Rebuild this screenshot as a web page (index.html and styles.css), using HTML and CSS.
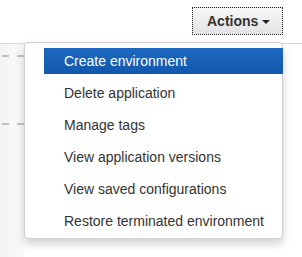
FILE: index.html
```html
<!DOCTYPE html>
<html lang="en">

<head>
  <meta charset="UTF-8">
  <meta name="viewport" content="width=device-width, initial-scale=1.0">
  <title>Actions</title>
  <link rel="stylesheet" href="styles.css">
</head>

<body>
  <div class="toolbar">
    <button class="actions-button" type="button">Actions <span class="caret"></span></button>
  </div>

  <div class="content">
    <div class="side-panel">
      <div class="dash-row"></div>
      <div class="dash-row"></div>
    </div>
  </div>

  <ul class="dropdown-menu">
    <li class="menu-item active">Create environment</li>
    <li class="menu-item">Delete application</li>
    <li class="menu-item">Manage tags</li>
    <li class="menu-item">View application versions</li>
    <li class="menu-item">View saved configurations</li>
    <li class="menu-item">Restore terminated environment</li>
  </ul>
</body>

</html>
```

FILE: styles.css
```css
* {
  margin: 0;
  padding: 0;
  box-sizing: border-box;
}

body {
  font-family: "Liberation Sans", Arial, sans-serif;
  background-color: white;
  width: 302px;
  height: 257px;
  overflow: hidden;
  position: relative;
}

.toolbar {
  display: flex;
  justify-content: flex-end;
  padding: 7px 19px 0 0;
  height: 43px;
}

.actions-button {
  font-family: "Liberation Sans", Arial, sans-serif;
  font-size: 14px;
  font-weight: bold;
  color: #333;
  height: 28px;
  width: 91px;
  padding: 0 0 0 14px;
  display: flex;
  align-items: center;
  border: 1px dotted #222;
  border-radius: 0;
  background: linear-gradient(to bottom, #f8f8f8, #e2e2e2);
}

.caret {
  display: inline-block;
  width: 0;
  height: 0;
  margin-left: 4px;
  margin-top: 1px;
  border-left: 4px solid transparent;
  border-right: 4px solid transparent;
  border-top: 4px solid #222;
}

.content {
  border-top: 1px solid #d8d8d8;
  height: 214px;
}

.side-panel {
  width: 24px;
  height: 100%;
  background: linear-gradient(to right, #f4f4f4, #fafafa);
  padding-top: 11px;
  display: flex;
  flex-direction: column;
  gap: 66px;
}

.dash-row {
  height: 2px;
  background: repeating-linear-gradient(to right, #c4c4c4 0 7px, transparent 7px 15px);
  margin-left: 2px;
}

.dropdown-menu {
  position: absolute;
  left: 24px;
  top: 42px;
  width: 259px;
  list-style: none;
  background-color: white;
  border: 1px solid #cfcfcf;
  border-radius: 4px;
  box-shadow: 0 5px 10px rgba(0, 0, 0, 0.18);
  padding: 5px 0 4px 19px;
  display: flex;
  flex-direction: column;
  gap: 6px;
}

.menu-item {
  height: 26px;
  line-height: 25px;
  padding: 1px 0 0 20px;
  font-size: 14px;
  color: #333;
  white-space: nowrap;
  overflow: hidden;
  margin-right: -1px;
}

.menu-item.active {
  color: white;
  background: linear-gradient(to bottom, #1d68c0, #1158ab);
}
```
